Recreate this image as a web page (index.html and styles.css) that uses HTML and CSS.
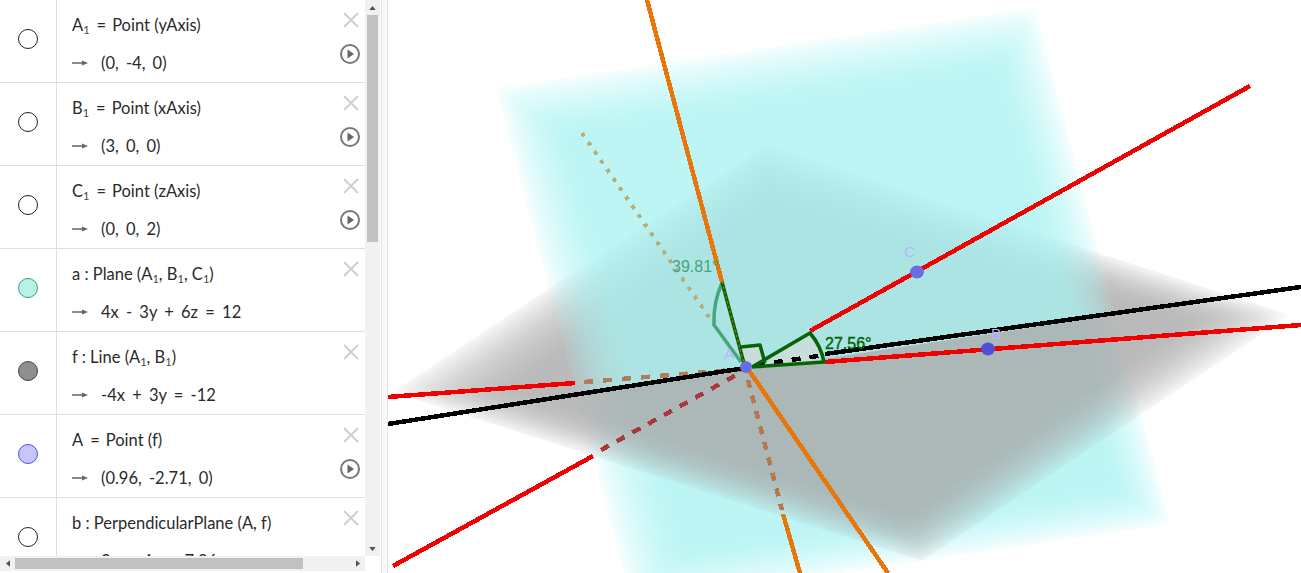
FILE: index.html
```html
<!DOCTYPE html>
<html lang="en">
<head>
<meta charset="utf-8">
<title>Algebra and 3D view</title>
<link rel="stylesheet" href="styles.css">
</head>
<body>
<div class="app">
  <aside class="algebra">
    <div class="list">
      <section class="row">
        <div class="marble-cell"><span class="marble"></span></div>
        <div class="content">
          <div class="def">A<sub>1</sub><span class="eq">=</span>Point (yAxis)</div>
          <div class="val"><svg class="arrow" viewBox="0 0 16 8"><path d="M0 4h11"/><path class="tip" d="M10 1.500 16 4l-6 2.500z"/></svg>(0, -4, 0)</div>
        </div>
        <div class="actions">
          <svg class="close" viewBox="0 0 16 16"><path d="M1 1 15 15M15 1 1 15"/></svg>
          <svg class="play" viewBox="0 0 20 20"><circle cx="10" cy="10" r="9"/><path d="M7.500 5.500 14 10l-6.500 4.500z"/></svg>
        </div>
      </section>
      <section class="row">
        <div class="marble-cell"><span class="marble"></span></div>
        <div class="content">
          <div class="def">B<sub>1</sub><span class="eq">=</span>Point (xAxis)</div>
          <div class="val"><svg class="arrow" viewBox="0 0 16 8"><path d="M0 4h11"/><path class="tip" d="M10 1.500 16 4l-6 2.500z"/></svg>(3, 0, 0)</div>
        </div>
        <div class="actions">
          <svg class="close" viewBox="0 0 16 16"><path d="M1 1 15 15M15 1 1 15"/></svg>
          <svg class="play" viewBox="0 0 20 20"><circle cx="10" cy="10" r="9"/><path d="M7.500 5.500 14 10l-6.500 4.500z"/></svg>
        </div>
      </section>
      <section class="row">
        <div class="marble-cell"><span class="marble"></span></div>
        <div class="content">
          <div class="def">C<sub>1</sub><span class="eq">=</span>Point (zAxis)</div>
          <div class="val"><svg class="arrow" viewBox="0 0 16 8"><path d="M0 4h11"/><path class="tip" d="M10 1.500 16 4l-6 2.500z"/></svg>(0, 0, 2)</div>
        </div>
        <div class="actions">
          <svg class="close" viewBox="0 0 16 16"><path d="M1 1 15 15M15 1 1 15"/></svg>
          <svg class="play" viewBox="0 0 20 20"><circle cx="10" cy="10" r="9"/><path d="M7.500 5.500 14 10l-6.500 4.500z"/></svg>
        </div>
      </section>
      <section class="row">
        <div class="marble-cell"><span class="marble marble-cyan"></span></div>
        <div class="content">
          <div class="def">a : Plane (A<sub>1</sub>, B<sub>1</sub>, C<sub>1</sub>)</div>
          <div class="val"><svg class="arrow" viewBox="0 0 16 8"><path d="M0 4h11"/><path class="tip" d="M10 1.500 16 4l-6 2.500z"/></svg>4x - 3y + 6z = 12</div>
        </div>
        <div class="actions">
          <svg class="close" viewBox="0 0 16 16"><path d="M1 1 15 15M15 1 1 15"/></svg>
        </div>
      </section>
      <section class="row">
        <div class="marble-cell"><span class="marble marble-gray"></span></div>
        <div class="content">
          <div class="def">f : Line (A<sub>1</sub>, B<sub>1</sub>)</div>
          <div class="val"><svg class="arrow" viewBox="0 0 16 8"><path d="M0 4h11"/><path class="tip" d="M10 1.500 16 4l-6 2.500z"/></svg>-4x + 3y = -12</div>
        </div>
        <div class="actions">
          <svg class="close" viewBox="0 0 16 16"><path d="M1 1 15 15M15 1 1 15"/></svg>
        </div>
      </section>
      <section class="row">
        <div class="marble-cell"><span class="marble marble-blue"></span></div>
        <div class="content">
          <div class="def">A<span class="eq">=</span>Point (f)</div>
          <div class="val"><svg class="arrow" viewBox="0 0 16 8"><path d="M0 4h11"/><path class="tip" d="M10 1.500 16 4l-6 2.500z"/></svg>(0.96, -2.71, 0)</div>
        </div>
        <div class="actions">
          <svg class="close" viewBox="0 0 16 16"><path d="M1 1 15 15M15 1 1 15"/></svg>
          <svg class="play" viewBox="0 0 20 20"><circle cx="10" cy="10" r="9"/><path d="M7.500 5.500 14 10l-6.500 4.500z"/></svg>
        </div>
      </section>
      <section class="row">
        <div class="marble-cell"><span class="marble"></span></div>
        <div class="content">
          <div class="def">b : PerpendicularPlane (A, f)</div>
          <div class="val"><svg class="arrow" viewBox="0 0 16 8"><path d="M0 4h11"/><path class="tip" d="M10 1.500 16 4l-6 2.500z"/></svg>3x + 4y = 7.86</div>
        </div>
        <div class="actions">
          <svg class="close" viewBox="0 0 16 16"><path d="M1 1 15 15M15 1 1 15"/></svg>
        </div>
      </section>
    </div>
    <div class="vbar">
      <svg class="tri" viewBox="0 0 8 5"><path d="M4 0 8 5H0z"/></svg>
      <div class="vtrack"><div class="vthumb"></div></div>
      <svg class="tri" viewBox="0 0 8 5"><path d="M0 0H8L4 5z"/></svg>
    </div>
    <div class="hbar">
      <svg class="tri-h" viewBox="0 0 5 8"><path d="M5 0V8L0 4z"/></svg>
      <div class="htrack"><div class="hthumb"></div></div>
      <svg class="tri-h" viewBox="0 0 5 8"><path d="M0 0 5 4 0 8z"/></svg>
    </div>
  </aside>
  <div class="splitter"></div>
  <main class="view">
    <svg class="scene" viewBox="388 0 913 573">
      <defs>
        <filter id="smooth" filterUnits="userSpaceOnUse" x="340" y="-40" width="1010" height="700"><feGaussianBlur stdDeviation="6"/></filter>
        <clipPath id="above"><polygon points="388,0 1301,0 1301,287 388,424"/></clipPath>
        <clipPath id="below"><polygon points="388,424 1301,287 1301,573 388,573"/></clipPath>
        <clipPath id="edge-cyan"><polygon points="496,88 1035,8 1170,524 632,604"/></clipPath>
        <clipPath id="edge-gray"><polygon points="393,392 765,145 1290,315 922,561"/></clipPath>
        <g id="plane-cyan" clip-path="url(#edge-cyan)"><g class="cyan" filter="url(#smooth)">
          <polygon points="496,88 1035,8 1170,524 632,604"/>
          <polygon points="505,94 1030,16 1163,519 639,597"/>
          <polygon points="514,100 1025,24 1156,514 646,590"/>
          <polygon points="523,106 1020,32 1149,509 653,583"/>
          <polygon points="533,112 1015,41 1141,505 659,576"/>
          <polygon points="542,118 1010,49 1134,500 666,569"/>
          <polygon points="551,124 1005,57 1127,495 673,562"/>
          <polygon points="560,130 1000,65 1120,490 680,555"/>
        </g></g>
        <g id="plane-gray" clip-path="url(#edge-gray)"><g class="gray" filter="url(#smooth)">
          <polygon points="393,392 765,145 1290,315 922,561"/>
          <polygon points="408,392 765,152 1277,315 920,555"/>
          <polygon points="424,392 765,159 1264,316 918,549"/>
          <polygon points="439,392 765,166 1251,316 916,543"/>
          <polygon points="454,392 766,174 1239,317 914,538"/>
          <polygon points="469,392 766,181 1226,317 912,532"/>
          <polygon points="485,392 766,188 1213,318 910,526"/>
          <polygon points="500,392 766,195 1200,318 908,520"/>
        </g></g>
      </defs>
      <g clip-path="url(#above)"><use href="#plane-gray"/><use href="#plane-cyan"/></g>
      <g clip-path="url(#below)"><use href="#plane-cyan"/><use href="#plane-gray"/></g>

      <path class="sector" d="M752 367 810 333Q821 346 824 362Z"/>
      <path class="sector" d="M740 347 760 345 765 363 746 367Z"/>

      <path class="ln red" d="M388 397 575 383"/>
      <path class="ln dash-brown" d="M584 382 745 369"/>
      <path class="ln red" d="M825 362 1301 325"/>
      <path class="ln black" d="M388 424 745 368"/>
      <path class="ln black-dash" d="M756 365 825 355"/>
      <path class="ln black" d="M825 354 1301 287"/>
      <path class="ln red" d="M393 566 593 456"/>
      <path class="ln dash-red" d="M601 450 738 374"/>
      <path class="ln red" d="M810 331 1250 86"/>
      <path class="ln orange" d="M647 0 722 282"/>
      <path class="ln orange" d="M748 369 888 573"/>
      <path class="ln dash-orange" d="M748 380 782 510"/>
      <path class="ln orange" d="M783 514 800 573"/>
      <path class="ln khaki" d="M582 133 711 320"/>

      <path class="ang-light" d="M722 283Q713 303 714 325L741 362"/>
      <path class="ang-dark" d="M722 282 745 367"/>
      <path class="orange-dots" d="M722 282 745 367"/>
      <path class="ang-dark" d="M741 347 760 345 765 363"/>
      <path class="ang-dark" d="M752 367 810 333Q821 346 824 362L752 367"/>

      <circle class="pt" cx="746" cy="367" r="6"/>
      <ellipse class="pt" cx="917" cy="272" rx="7" ry="6.500"/>
      <ellipse class="pt-b" cx="988" cy="349" rx="7" ry="6.500"/>

      <text class="lbl" x="724" y="359">A</text>
      <text class="lbl" x="904" y="257">C</text>
      <text class="lbl" x="991" y="339">B</text>
      <text class="deg deg-light" x="672" y="272">39.81°</text>
      <text class="deg deg-dark" x="825" y="349">27.56°</text>
    </svg>
  </main>
</div>
</body>
</html>
```
FILE: styles.css
```css
* { box-sizing: border-box; }
html, body { margin: 0; height: 100%; background: #fff; overflow: hidden; }
.app { display: flex; height: 573px; width: 1301px; }
.algebra {
  width: 381px;
  flex: none;
  height: 571px;
  display: grid;
  grid-template-columns: 365px 15px;
  grid-template-rows: 556px 15px;
  font-family: Lato, "Open Sans", sans-serif;
  color: #2a2a2a;
}
.splitter {
  width: 7px;
  flex: none;
  background: #f8f8f8;
  border-left: 1px solid #e4e4e4;
  border-right: 1px solid #e4e4e4;
}
.list { overflow: hidden; }
.row {
  display: grid;
  grid-template-columns: 57px 1fr 30px;
  height: 83px;
  border-bottom: 1px solid #dedede;
}
.marble-cell {
  border-right: 1px solid #dedede;
  padding-top: 29px;
  padding-left: 18px;
}
.marble {
  display: block;
  width: 20px;
  height: 20px;
  border-radius: 50%;
  border: 1px solid #222;
  background: #fff;
}
.marble-cyan { background: #b8f2e6; border-color: #2ea88a; }
.marble-gray { background: #8f8f8f; border-color: #444; }
.marble-blue { background: #c6c6fb; border-color: #5050e6; }
.content { padding: 15px 0 0 15px; white-space: nowrap; }
.def { font-size: 16.500px; line-height: 20px; height: 38px; }
.val { font-size: 16.500px; line-height: 20px; display: flex; align-items: center; word-spacing: 3px; }
.eq { margin: 0 6px 0 7px; }
sub { font-size: 11px; line-height: 0; vertical-align: -3px; color: #444; }
.arrow { width: 16px; height: 8px; margin-right: 13px; flex: none; }
.arrow path { stroke: #666; stroke-width: 1.500; fill: none; }
.arrow .tip { fill: #666; stroke: none; }
.actions { display: flex; flex-direction: column; align-items: center; padding: 12px 0 0 0; gap: 16px; margin-left: 0; }
.close { width: 16px; height: 16px; flex: none; margin-left: 2px; }
.close path { stroke: #cfcfcf; stroke-width: 2; fill: none; }
.play { width: 20px; height: 20px; flex: none; }
.play circle { fill: none; stroke: #777; stroke-width: 2; }
.play path { fill: #666; }
.vbar {
  background: #f1f1f1;
  display: flex;
  flex-direction: column;
  align-items: center;
}
.tri { width: 7px; height: 4px; margin: 6px 0 5px; flex: none; }
.tri path, .tri-h path { fill: #505050; }
.vtrack { flex: 1; width: 100%; padding: 0 2px; }
.vthumb { height: 227px; background: #c1c1c1; }
.hbar {
  background: #f1f1f1;
  display: flex;
  align-items: center;
}
.tri-h { width: 4px; height: 7px; margin: 0 5px 0 6px; flex: none; }
.htrack { flex: 1; height: 11px; }
.hthumb { width: 288px; height: 100%; background: #c1c1c1; }
.view { flex: 1; min-width: 0; }
.scene { display: block; width: 913px; height: 573px; }
.cyan polygon { fill: #abf5f5; fill-opacity: .163; }
.gray polygon { fill: #a8a8a8; fill-opacity: .172; }
.sector { fill: #cfdcdc; opacity: .85; stroke: none; }
.ln { fill: none; stroke-width: 4.500; shape-rendering: crispEdges; }
.red { stroke: #f00000; }
.black { stroke: #000; }
.black-dash { stroke: #000; stroke-dasharray: 9 9; }
.orange { stroke: #e8760a; }
.dash-brown { stroke: #b47a5c; stroke-dasharray: 9 10; }
.dash-red { stroke: #a83a3e; stroke-dasharray: 9 9; }
.dash-orange { stroke: #b8764e; stroke-dasharray: 8 8; }
.khaki { stroke: #b5ae78; stroke-dasharray: 4 7; stroke-width: 4; }
.ang-light { fill: none; stroke: #45a57c; stroke-width: 3.500; }
.ang-dark { fill: none; stroke: #056405; stroke-width: 3.500; stroke-linejoin: round; }
.orange-dots { fill: none; stroke: #e8760a; stroke-width: 1; stroke-dasharray: 2 3; }
.pt { fill: #6c6ce2; }
.pt-b { fill: #5050d4; }
.lbl { font: 15.500px "Liberation Sans", sans-serif; fill: #b8b4ff; }
.deg { font: 16px "Liberation Sans", sans-serif; }
.deg-light { fill: #45a57c; }
.deg-dark { fill: #056405; stroke: #056405; stroke-width: .4; }
```
